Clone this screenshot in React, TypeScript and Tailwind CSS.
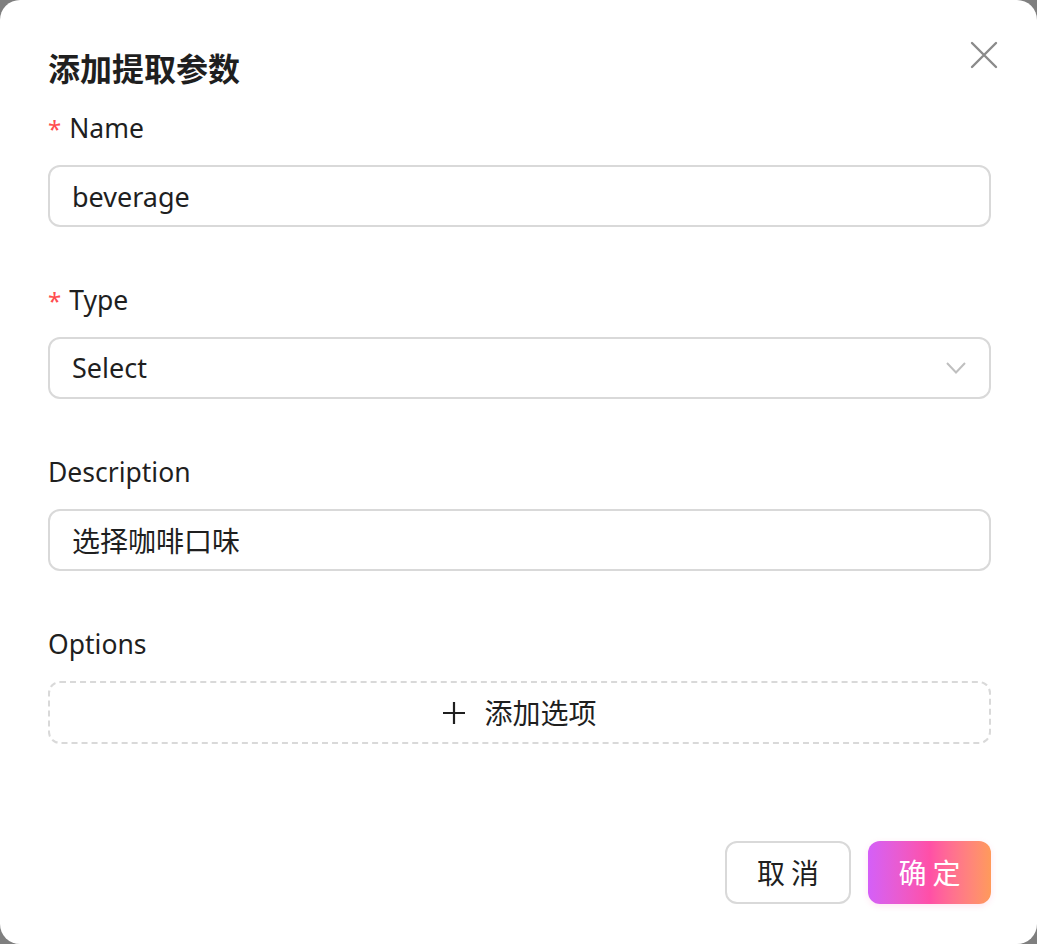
import React from 'react';

const font = { fontFamily: '"Noto Sans", "Noto Sans CJK SC", sans-serif' };

function Label({ text, required }: { text: string; required?: boolean }) {
  return (
    <div className="flex items-center h-[36px] text-[26.5px] leading-[36px] text-[#1f1f1f]">
      {required && <span className="text-[#ff4d4f] mr-[8px] text-[24px] mt-[2px]">*</span>}
      <span>{text}</span>
    </div>
  );
}

export default function App() {
  const [name, setName] = React.useState('beverage');
  const [desc, setDesc] = React.useState('选择咖啡口味');

  return (
    <div className="w-[1037px] h-[944px] bg-[#7f7f7f]" style={font}>
      <div className="relative w-full h-full bg-white rounded-[20px] pl-[48px] pr-[46px] pt-[45px]">
        <button className="absolute right-[38px] top-[40px] w-[30px] h-[30px] flex items-center justify-center">
          <svg width="28" height="28" viewBox="0 0 28 28" fill="none" stroke="#8a8a8a" strokeWidth="2.4" strokeLinecap="round">
            <path d="M2 2 L26 26 M26 2 L2 26" />
          </svg>
        </button>

        <h2 className="h-[44px] leading-[44px] text-[32px] font-bold text-[#1f1f1f]" style={{ fontFamily: '"Noto Sans CJK SC", sans-serif' }}>
          添加提取参数
        </h2>

        <div className="mt-[21px] flex flex-col">
          <Label text="Name" required />
          <input
            value={name}
            onChange={(e) => setName(e.target.value)}
            className="mt-[19px] h-[62px] w-full rounded-[12px] border-2 border-[#d9d9d9] px-[22px] text-[27px] text-[#1f1f1f] outline-none"
          />

          <div className="mt-[55px]">
            <Label text="Type" required />
          </div>
          <div className="mt-[19px] h-[62px] w-full rounded-[12px] border-2 border-[#d9d9d9] pl-[22px] pr-[22px] flex items-center justify-between text-[27px] text-[#1f1f1f]">
            <span>Select</span>
            <svg width="22" height="14" viewBox="0 0 22 14" fill="none" stroke="#bfbfbf" strokeWidth="2">
              <path d="M2 2 L11 11.5 L20 2" />
            </svg>
          </div>

          <div className="mt-[55px]">
            <Label text="Description" />
          </div>
          <input
            value={desc}
            onChange={(e) => setDesc(e.target.value)}
            className="mt-[19px] h-[62px] w-full rounded-[12px] border-2 border-[#d9d9d9] px-[22px] text-[28px] text-[#1f1f1f] outline-none"
          />

          <div className="mt-[55px]">
            <Label text="Options" />
          </div>
          <button className="mt-[19px] h-[63px] w-full rounded-[12px] border-2 border-dashed border-[#d9d9d9] flex items-center justify-center gap-[18px] text-[28px] text-[#1f1f1f]">
            <svg width="24" height="24" viewBox="0 0 24 24" fill="none" stroke="#1f1f1f" strokeWidth="2.2">
              <path d="M12 1 V23 M1 12 H23" />
            </svg>
            <span>添加选项</span>
          </button>
        </div>

        <div className="mt-[97px] flex justify-end gap-[17px]">
          <button className="h-[63px] w-[126px] rounded-[12px] border-2 border-[#d9d9d9] bg-white text-[28px] text-[#1f1f1f] tracking-[6px] pl-[6px]">
            取消
          </button>
          <button className="h-[63px] w-[123px] rounded-[12px] bg-gradient-to-r from-[#d45ff8] via-[#ff4fa7] to-[#ff9a5a] text-[28px] text-white tracking-[6px] pl-[6px] shadow-[0_2px_6px_rgba(255,80,160,0.15)]">
            确定
          </button>
        </div>
      </div>
    </div>
  );
}
